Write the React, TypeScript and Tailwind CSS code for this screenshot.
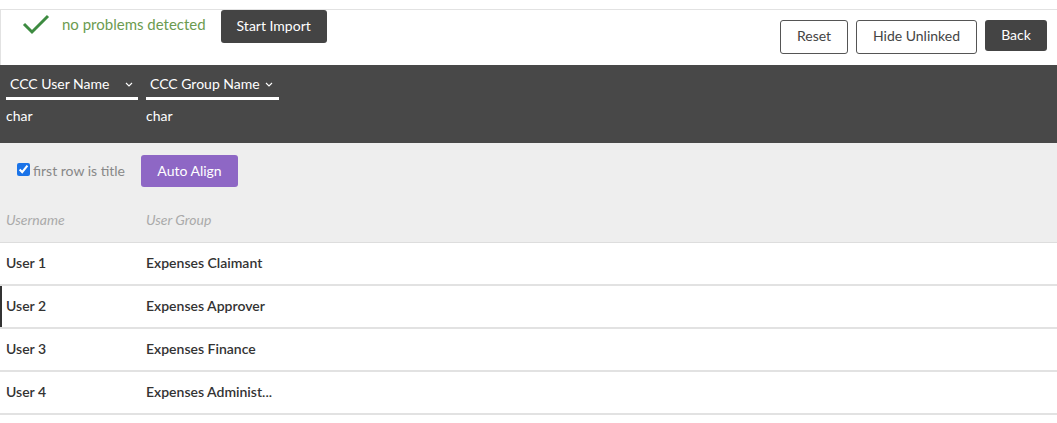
import React from "react";

const rows = [
  ["User 1", "Expenses Claimant"],
  ["User 2", "Expenses Approver"],
  ["User 3", "Expenses Finance"],
  ["User 4", "Expenses Administ..."],
];

function Chevron() {
  return (
    <svg width="8" height="5" viewBox="0 0 8 5" className="shrink-0 mt-[2px]">
      <path d="M1 1 L4 4 L7 1" fill="none" stroke="white" strokeWidth="1.1" />
    </svg>
  );
}

export default function App() {
  return (
    <div className="w-[1057px] h-[423px] overflow-hidden bg-white text-[14px]" style={{ fontFamily: "Lato, 'Open Sans', sans-serif" }}>
      <div className="h-[9px]" />
      <div className="h-[56px] border-t border-l border-[#e2e2e2] flex justify-between">
        <div className="flex items-start">
          <svg width="28" height="22" viewBox="0 0 28 22" className="ml-[21px] mt-[4px]">
            <path d="M2 10 L10 18 L26 2" fill="none" stroke="#3d8b40" strokeWidth="3" />
          </svg>
          <span className="ml-[12px] mt-[4px] text-[#6c9b50] text-[15px] leading-[20px]">no problems detected</span>
          <button className="ml-[15px] h-[33px] w-[106px] rounded-[3px] bg-[#444444] text-white text-[14px] pb-[3px]">Start Import</button>
        </div>
        <div className="flex items-start gap-[8px] mr-[10px] mt-[10px]">
          <button className="h-[34px] w-[68px] rounded-[3px] border border-[#555] text-[#444] text-[14px] pb-[3px]">Reset</button>
          <button className="h-[34px] w-[121px] rounded-[3px] border border-[#555] text-[#444] text-[14px] pb-[3px]">Hide Unlinked</button>
          <button className="h-[31px] w-[62px] rounded-[3px] bg-[#444444] text-white text-[14px] pb-[2px]">Back</button>
        </div>
      </div>
      <div className="h-[78px] bg-[#484848] pt-[8px] px-[6px] text-white">
        <div className="flex gap-[8px]">
          <div className="w-[132px] border-b-[3px] border-white h-[27px] flex items-center justify-between pl-[4px] pr-[5px] pb-[4px]">
            <span className="text-[14px]">CCC User Name</span>
            <Chevron />
          </div>
          <div className="w-[133px] border-b-[3px] border-white h-[27px] flex items-center pl-[4px] pb-[4px] gap-[5px]">
            <span className="text-[14px]">CCC Group Name</span>
            <Chevron />
          </div>
        </div>
        <div className="flex mt-[5px] text-[14px]">
          <span className="w-[140px]">char</span>
          <span>char</span>
        </div>
      </div>
      <div className="h-[100px] bg-[#eeeeee] border-b border-[#dddddd]">
        <div className="flex items-center pt-[12px] pl-[17px]">
          <input type="checkbox" defaultChecked className="w-[13px] h-[13px] m-0 mb-[3px] accent-[#1a73e8]" />
          <span className="ml-[3px] text-[#888] text-[14px] mb-[2px]">first row is title</span>
          <button className="ml-[16px] h-[32px] w-[97px] rounded-[3px] bg-[#8e67c5] text-white text-[14px] pb-[2px]">Auto Align</button>
        </div>
        <div className="flex pl-[6px] mt-[22px] italic text-[#aaaaaa] text-[14px]">
          <span className="w-[140px]">Username</span>
          <span>User Group</span>
        </div>
      </div>
      {rows.map(([u, g], i) => (
        <div key={u} className={`h-[43px] flex items-center pb-[2px] border-b-2 border-[#e2e2e2] text-[14px] font-semibold text-[#333] ${i === 1 ? "shadow-[inset_2px_0_0_#333]" : ""}`}>
          <span className="w-[146px] pl-[6px]">{u}</span>
          <span>{g}</span>
        </div>
      ))}
    </div>
  );
}
